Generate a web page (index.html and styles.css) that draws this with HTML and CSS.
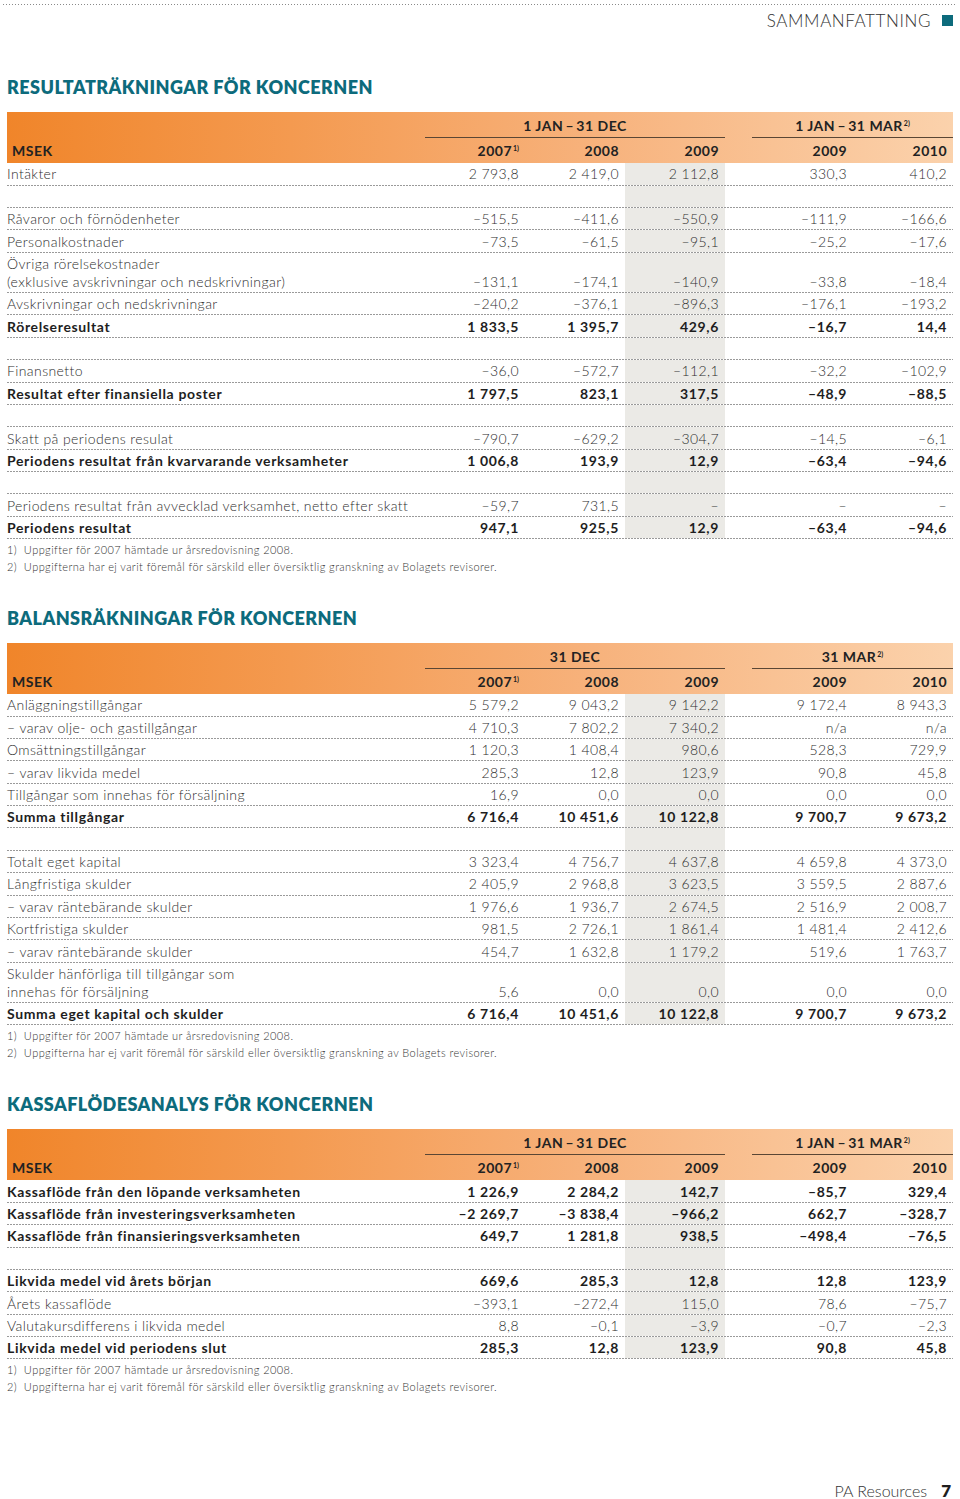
FILE: index.html
```html
<!DOCTYPE html>
<html lang="sv">
<head>
<meta charset="utf-8">
<title>Sammanfattning</title>
<link rel="stylesheet" href="styles.css">
</head>
<body>
<div class="page">
  <div class="topline"></div>
  <header class="runhead"><span>SAMMANFATTNING</span><i class="marker"></i></header>

  <section class="statement s1">
    <h2 class="title">RESULTATRÄKNINGAR FÖR KONCERNEN</h2>
    <div class="table">
      <div class="head">
        <div class="hrow groups"><span class="g1">1 JAN&thinsp;–&thinsp;31 DEC</span><span class="g2">1 JAN&thinsp;–&thinsp;31 MAR<sup>2)</sup></span></div>
        <div class="hrow years"><span class="lbl">MSEK</span><span>2007<sup>1)</sup></span><span>2008</span><span>2009</span><span>2009</span><span>2010</span></div>
      </div>
      <div class="row"><span class="lbl">Intäkter</span><span>2 793,8</span><span>2 419,0</span><span>2 112,8</span><span>330,3</span><span>410,2</span></div>
      <div class="row"><span class="lbl">&nbsp;</span><span></span><span></span><span></span></div>
      <div class="row"><span class="lbl">Råvaror och förnödenheter</span><span>–515,5</span><span>–411,6</span><span>–550,9</span><span>–111,9</span><span>–166,6</span></div>
      <div class="row"><span class="lbl">Personalkostnader</span><span>–73,5</span><span>–61,5</span><span>–95,1</span><span>–25,2</span><span>–17,6</span></div>
      <div class="row"><span class="lbl">Övriga rörelsekostnader<br>(exklusive avskrivningar och nedskrivningar)</span><span>–131,1</span><span>–174,1</span><span>–140,9</span><span>–33,8</span><span>–18,4</span></div>
      <div class="row"><span class="lbl">Avskrivningar och nedskrivningar</span><span>–240,2</span><span>–376,1</span><span>–896,3</span><span>–176,1</span><span>–193,2</span></div>
      <div class="row bold"><span class="lbl">Rörelseresultat</span><span>1 833,5</span><span>1 395,7</span><span>429,6</span><span>–16,7</span><span>14,4</span></div>
      <div class="row"><span class="lbl">&nbsp;</span><span></span><span></span><span></span></div>
      <div class="row"><span class="lbl">Finansnetto</span><span>–36,0</span><span>–572,7</span><span>–112,1</span><span>–32,2</span><span>–102,9</span></div>
      <div class="row bold"><span class="lbl">Resultat efter finansiella poster</span><span>1 797,5</span><span>823,1</span><span>317,5</span><span>–48,9</span><span>–88,5</span></div>
      <div class="row"><span class="lbl">&nbsp;</span><span></span><span></span><span></span></div>
      <div class="row"><span class="lbl">Skatt på periodens resulat</span><span>–790,7</span><span>–629,2</span><span>–304,7</span><span>–14,5</span><span>–6,1</span></div>
      <div class="row bold"><span class="lbl">Periodens resultat från kvarvarande verksamheter</span><span>1 006,8</span><span>193,9</span><span>12,9</span><span>–63,4</span><span>–94,6</span></div>
      <div class="row"><span class="lbl">&nbsp;</span><span></span><span></span><span></span></div>
      <div class="row"><span class="lbl">Periodens resultat från avvecklad verksamhet, netto efter skatt</span><span>–59,7</span><span>731,5</span><span>–</span><span>–</span><span>–</span></div>
      <div class="row bold"><span class="lbl">Periodens resultat</span><span>947,1</span><span>925,5</span><span>12,9</span><span>–63,4</span><span>–94,6</span></div>
    </div>
    <div class="notes">
      <p>1)&nbsp; Uppgifter för 2007 hämtade ur årsredovisning 2008.</p>
      <p>2)&nbsp; Uppgifterna har ej varit föremål för särskild eller översiktlig granskning av Bolagets revisorer.</p>
    </div>
  </section>

  <section class="statement">
    <h2 class="title">BALANSRÄKNINGAR FÖR KONCERNEN</h2>
    <div class="table">
      <div class="head">
        <div class="hrow groups"><span class="g1">31 DEC</span><span class="g2">31 MAR<sup>2)</sup></span></div>
        <div class="hrow years"><span class="lbl">MSEK</span><span>2007<sup>1)</sup></span><span>2008</span><span>2009</span><span>2009</span><span>2010</span></div>
      </div>
      <div class="row"><span class="lbl">Anläggningstillgångar</span><span>5 579,2</span><span>9 043,2</span><span>9 142,2</span><span>9 172,4</span><span>8 943,3</span></div>
      <div class="row"><span class="lbl">– varav olje- och gastillgångar</span><span>4 710,3</span><span>7 802,2</span><span>7 340,2</span><span>n/a</span><span>n/a</span></div>
      <div class="row"><span class="lbl">Omsättningstillgångar</span><span>1 120,3</span><span>1 408,4</span><span>980,6</span><span>528,3</span><span>729,9</span></div>
      <div class="row"><span class="lbl">– varav likvida medel</span><span>285,3</span><span>12,8</span><span>123,9</span><span>90,8</span><span>45,8</span></div>
      <div class="row"><span class="lbl">Tillgångar som innehas för försäljning</span><span>16,9</span><span>0,0</span><span>0,0</span><span>0,0</span><span>0,0</span></div>
      <div class="row bold"><span class="lbl">Summa tillgångar</span><span>6 716,4</span><span>10 451,6</span><span>10 122,8</span><span>9 700,7</span><span>9 673,2</span></div>
      <div class="row"><span class="lbl">&nbsp;</span><span></span><span></span><span></span></div>
      <div class="row"><span class="lbl">Totalt eget kapital</span><span>3 323,4</span><span>4 756,7</span><span>4 637,8</span><span>4 659,8</span><span>4 373,0</span></div>
      <div class="row"><span class="lbl">Långfristiga skulder</span><span>2 405,9</span><span>2 968,8</span><span>3 623,5</span><span>3 559,5</span><span>2 887,6</span></div>
      <div class="row"><span class="lbl">– varav räntebärande skulder</span><span>1 976,6</span><span>1 936,7</span><span>2 674,5</span><span>2 516,9</span><span>2 008,7</span></div>
      <div class="row"><span class="lbl">Kortfristiga skulder</span><span>981,5</span><span>2 726,1</span><span>1 861,4</span><span>1 481,4</span><span>2 412,6</span></div>
      <div class="row"><span class="lbl">– varav räntebärande skulder</span><span>454,7</span><span>1 632,8</span><span>1 179,2</span><span>519,6</span><span>1 763,7</span></div>
      <div class="row"><span class="lbl">Skulder hänförliga till tillgångar som<br>innehas för försäljning</span><span>5,6</span><span>0,0</span><span>0,0</span><span>0,0</span><span>0,0</span></div>
      <div class="row bold"><span class="lbl">Summa eget kapital och skulder</span><span>6 716,4</span><span>10 451,6</span><span>10 122,8</span><span>9 700,7</span><span>9 673,2</span></div>
    </div>
    <div class="notes">
      <p>1)&nbsp; Uppgifter för 2007 hämtade ur årsredovisning 2008.</p>
      <p>2)&nbsp; Uppgifterna har ej varit föremål för särskild eller översiktlig granskning av Bolagets revisorer.</p>
    </div>
  </section>

  <section class="statement">
    <h2 class="title">KASSAFLÖDESANALYS FÖR KONCERNEN</h2>
    <div class="table">
      <div class="head">
        <div class="hrow groups"><span class="g1">1 JAN&thinsp;–&thinsp;31 DEC</span><span class="g2">1 JAN&thinsp;–&thinsp;31 MAR<sup>2)</sup></span></div>
        <div class="hrow years"><span class="lbl">MSEK</span><span>2007<sup>1)</sup></span><span>2008</span><span>2009</span><span>2009</span><span>2010</span></div>
      </div>
      <div class="row bold"><span class="lbl">Kassaflöde från den löpande verksamheten</span><span>1 226,9</span><span>2 284,2</span><span>142,7</span><span>–85,7</span><span>329,4</span></div>
      <div class="row bold"><span class="lbl">Kassaflöde från investeringsverksamheten</span><span>–2 269,7</span><span>–3 838,4</span><span>–966,2</span><span>662,7</span><span>–328,7</span></div>
      <div class="row bold"><span class="lbl">Kassaflöde från finansieringsverksamheten</span><span>649,7</span><span>1 281,8</span><span>938,5</span><span>–498,4</span><span>–76,5</span></div>
      <div class="row"><span class="lbl">&nbsp;</span><span></span><span></span><span></span></div>
      <div class="row bold"><span class="lbl">Likvida medel vid årets början</span><span>669,6</span><span>285,3</span><span>12,8</span><span>12,8</span><span>123,9</span></div>
      <div class="row"><span class="lbl">Årets kassaflöde</span><span>–393,1</span><span>–272,4</span><span>115,0</span><span>78,6</span><span>–75,7</span></div>
      <div class="row"><span class="lbl">Valutakursdifferens i likvida medel</span><span>8,8</span><span>–0,1</span><span>–3,9</span><span>–0,7</span><span>–2,3</span></div>
      <div class="row bold"><span class="lbl">Likvida medel vid periodens slut</span><span>285,3</span><span>12,8</span><span>123,9</span><span>90,8</span><span>45,8</span></div>
    </div>
    <div class="notes">
      <p>1)&nbsp; Uppgifter för 2007 hämtade ur årsredovisning 2008.</p>
      <p>2)&nbsp; Uppgifterna har ej varit föremål för särskild eller översiktlig granskning av Bolagets revisorer.</p>
    </div>
  </section>

  <footer class="folio"><span class="brand">PA Resources</span><span class="pageno">7</span></footer>
</div>
</body>
</html>
```

FILE: styles.css
```css
html, body {
  margin: 0;
  padding: 0;
  background: #fff;
}

body {
  font-family: Lato, "Noto Sans", "Liberation Sans", sans-serif;
  color: #3c3c3c;
}

.page {
  width: 960px;
  padding: 0 7px;
  box-sizing: border-box;
}

.topline {
  height: 1px;
  margin: 4px -4px 0;
  background: linear-gradient(to right, #8a8a8a 50%, transparent 50%) left top / 3px 1px repeat-x;
}

.runhead {
  display: flex;
  justify-content: flex-end;
  align-items: center;
  gap: 11px;
  margin-top: 5px;
  height: 20px;
  font-weight: 300;
  font-size: 17px;
  letter-spacing: 0.6px;
  color: #333;
}

.marker {
  display: block;
  width: 11px;
  height: 11px;
  background: #0d6b7c;
}

.statement {
  margin-top: 31.5px;
}

.statement.s1 {
  margin-top: 45.7px;
}

.title {
  margin: 0 0 14px;
  height: 22px;
  line-height: 22px;
  font-size: 18px;
  font-weight: 800;
  color: #0d6b7c;
  letter-spacing: 0.45px;
}

.table {
  width: 946px;
}

.head {
  background: linear-gradient(to right, #f0852a 0%, #f49a50 30%, #f7b27c 62%, #fbd2ac 100%);
  height: 51.5px;
}

.hrow,
.row {
  display: grid;
  grid-template-columns: 418px 100px 100px 100px 27px 101px 100px;
}

.hrow > span,
.row > span {
  text-align: right;
  padding-right: 6px;
  white-space: nowrap;
}

.hrow > span:nth-child(5),
.row > span:nth-child(5) {
  grid-column: 6;
}

.groups {
  height: 26.5px;
  box-sizing: border-box;
  font-weight: 700;
  font-size: 14px;
  letter-spacing: 0.5px;
  color: #222;
}

.groups span {
  text-align: center;
  padding: 3px 0 0;
  border-bottom: 1px solid #5a4634;
  line-height: 22px;
}

.groups .g1 {
  grid-column: 2 / 5;
}

.groups .g2 {
  grid-column: 6 / 8;
}

.years {
  height: 25px;
  line-height: 25px;
  font-weight: 700;
  font-size: 14px;
  letter-spacing: 0.5px;
  color: #222;
}

.years > span.lbl {
  text-align: left;
  padding-left: 5px;
}

sup {
  font-size: 7px;
  line-height: 0;
  vertical-align: 5px;
  margin-left: 1px;
  letter-spacing: 0;
}

.row {
  padding-bottom: 1px;
  background: linear-gradient(to right, #9a9a9a 62%, transparent 62%) left bottom / 3px 1px repeat-x;
  font-size: 14px;
  font-weight: 300;
  letter-spacing: 0.4px;
  color: #2e2e2e;
}

.row > span {
  padding-top: 2.2px;
  padding-bottom: 1.2px;
  line-height: 18px;
  display: flex;
  align-items: flex-end;
  justify-content: flex-end;
}

.row > span.lbl {
  display: block;
  text-align: left;
  padding-right: 0;
}

.row > span:nth-child(4) {
  background: #ebeae6;
}

.row.bold {
  font-weight: 700;
  letter-spacing: 0.65px;
  color: #1e1e1e;
}

.notes {
  padding-top: 3px;
  font-size: 11px;
  font-weight: 300;
  letter-spacing: 0.42px;
  color: #333;
}

.notes p {
  margin: 0;
  line-height: 16.5px;
}

.folio {
  display: flex;
  justify-content: flex-end;
  align-items: baseline;
  gap: 14px;
  margin-top: 88px;
  padding-right: 2px;
  height: 16px;
  line-height: 16px;
}

.folio .brand {
  font-size: 16px;
  font-weight: 300;
  color: #333;
}

.folio .pageno {
  font-size: 17px;
  font-weight: 800;
  color: #1e1e1e;
}
```
